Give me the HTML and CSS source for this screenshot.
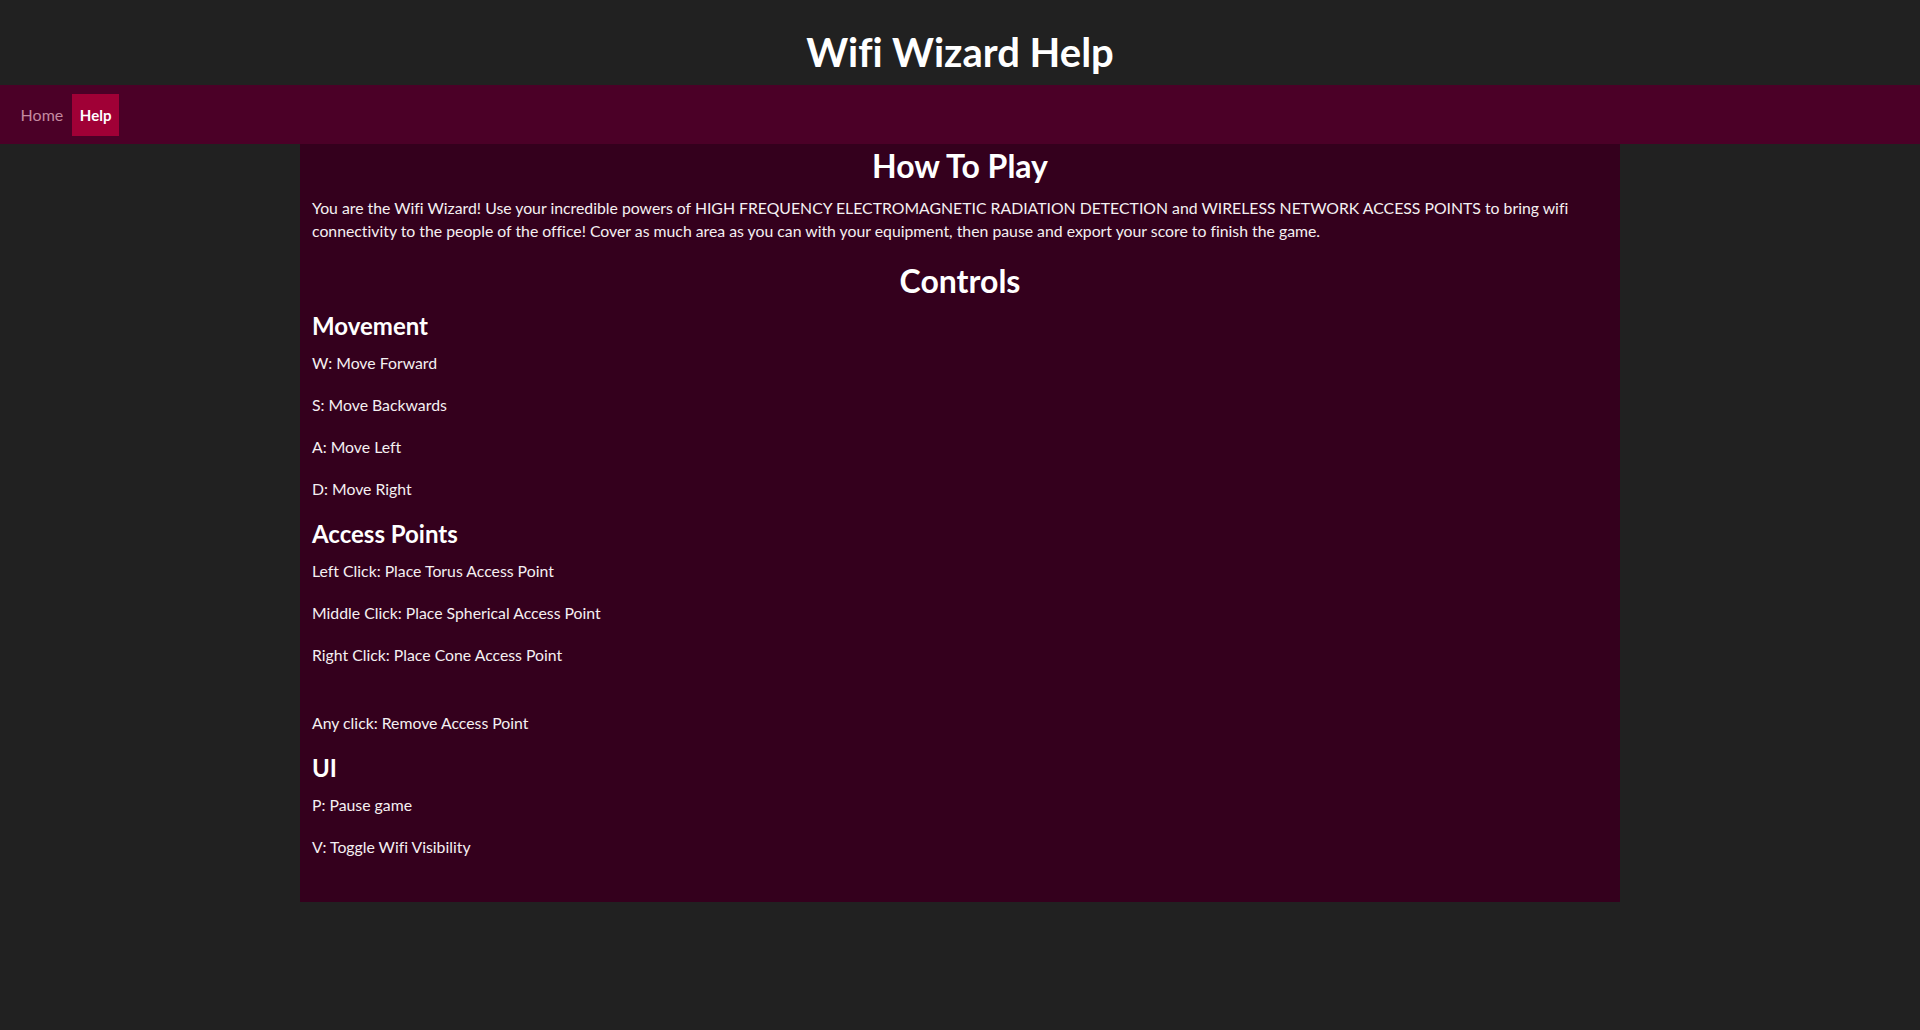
FILE: index.html
```html
<!DOCTYPE html>
<html lang="en">
<head>
<meta charset="utf-8">
<title>Wifi Wizard Help</title>
<link rel="stylesheet" href="styles.css">
</head>
<body>
<header class="site-header">
  <h1 class="site-title">Wifi Wizard Help</h1>
</header>
<nav class="nav">
  <a class="nav-link" href="#">Home</a>
  <a class="nav-link active" href="#">Help</a>
</nav>
<main class="content">
  <h1 class="section-title">How To Play</h1>
  <p class="text">You are the Wifi Wizard! Use your incredible powers of HIGH FREQUENCY ELECTROMAGNETIC RADIATION DETECTION and WIRELESS NETWORK ACCESS POINTS to bring wifi connectivity to the people of the office! Cover as much area as you can with your equipment, then pause and export your score to finish the game.</p>
  <h1 class="section-title">Controls</h1>
  <h2 class="sub-title">Movement</h2>
  <p class="text">W: Move Forward</p>
  <p class="text">S: Move Backwards</p>
  <p class="text">A: Move Left</p>
  <p class="text">D: Move Right</p>
  <h2 class="sub-title">Access Points</h2>
  <p class="text">Left Click: Place Torus Access Point</p>
  <p class="text">Middle Click: Place Spherical Access Point</p>
  <p class="text">Right Click: Place Cone Access Point</p>
  <p class="text spaced">Any click: Remove Access Point</p>
  <h2 class="sub-title">UI</h2>
  <p class="text">P: Pause game</p>
  <p class="text">V: Toggle Wifi Visibility</p>
</main>
</body>
</html>
```
FILE: styles.css
```css
html, body {
  margin: 0;
  padding: 0;
  background: #212121;
  color: #ffffff;
  font-family: "Lato", "Open Sans", sans-serif;
  font-variant-ligatures: none;
}

.site-header {
  height: 85px;
  box-sizing: border-box;
  padding-top: 27px;
  background: #212121;
}

.site-title {
  margin: 0;
  font-size: 40px;
  line-height: 50px;
  font-weight: 700;
  text-align: center;
  color: #ffffff;
}

.nav {
  display: flex;
  align-items: center;
  height: 59px;
  box-sizing: border-box;
  padding: 1px 12px 0 12px;
  background: #4b0027;
}

.nav-link {
  display: block;
  padding: 0 8.6px;
  height: 42.5px;
  line-height: 42.5px;
  font-size: 16px;
  color: #c48aa0;
  text-decoration: none;
}

.nav-link.active {
  padding: 0 8px;
  background: #a00036;
  color: #ffffff;
  font-size: 15px;
  font-weight: 700;
}

.content {
  width: 1320px;
  margin: 0 auto;
  box-sizing: border-box;
  padding: 2px 12px 25px 12px;
  background: #34001d;
}

.section-title {
  margin: 0 0 10px 0;
  font-size: 32px;
  line-height: 40px;
  font-weight: 700;
  text-align: center;
}

.sub-title {
  margin: 0 0 10px 0;
  font-size: 24px;
  line-height: 30px;
  font-weight: 700;
}

.text {
  margin: 0 0 18.6px 0;
  font-size: 15.8px;
  line-height: 23.4px;
  color: #f4f0f2;
}

.text.spaced {
  margin-top: 44px;
}
```
